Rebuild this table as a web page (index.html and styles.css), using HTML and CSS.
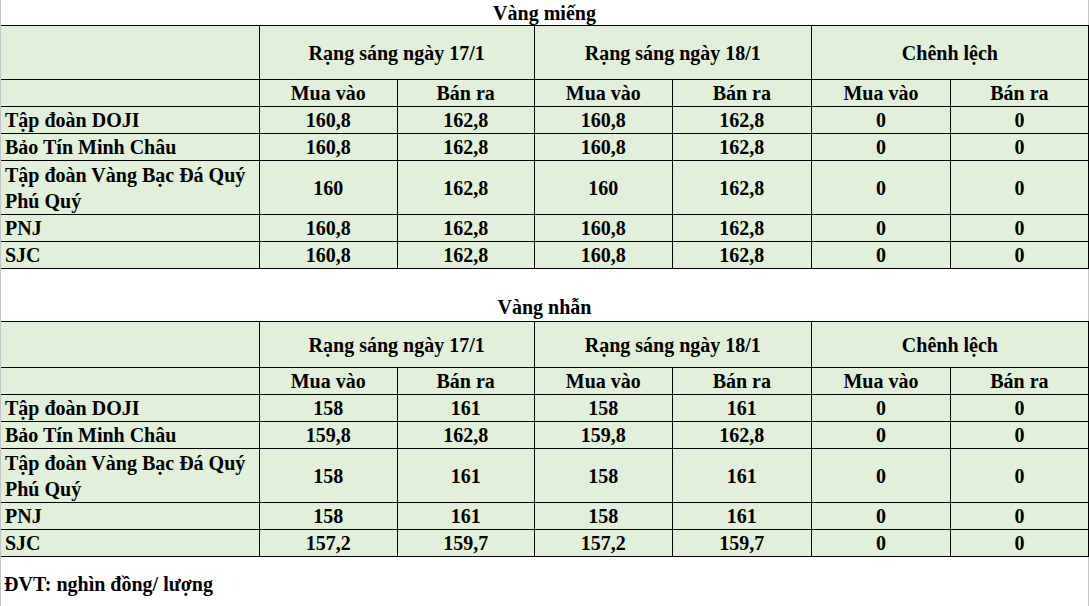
FILE: index.html
```html
<!DOCTYPE html>
<html lang="vi">
<head>
<meta charset="utf-8">
<title>Giá vàng</title>
<link rel="stylesheet" href="styles.css">
</head>
<body>
<div class="sheet">
  <div class="title title-first">Vàng miếng</div>
  <table class="grid">
    <colgroup>
      <col class="c-name"><col class="c-num"><col class="c-num2"><col class="c-num"><col class="c-num3"><col class="c-num3"><col class="c-num">
    </colgroup>
    <tr class="h1">
      <td></td>
      <td colspan="2">Rạng sáng ngày 17/1</td>
      <td colspan="2">Rạng sáng ngày 18/1</td>
      <td colspan="2">Chênh lệch</td>
    </tr>
    <tr class="h2">
      <td></td><td>Mua vào</td><td>Bán ra</td><td>Mua vào</td><td>Bán ra</td><td>Mua vào</td><td>Bán ra</td>
    </tr>
    <tr class="r"><td class="name">Tập đoàn DOJI</td><td>160,8</td><td>162,8</td><td>160,8</td><td>162,8</td><td>0</td><td>0</td></tr>
    <tr class="r"><td class="name">Bảo Tín Minh Châu</td><td>160,8</td><td>162,8</td><td>160,8</td><td>162,8</td><td>0</td><td>0</td></tr>
    <tr class="r2"><td class="name">Tập đoàn Vàng Bạc Đá Quý<br>Phú Quý</td><td>160</td><td>162,8</td><td>160</td><td>162,8</td><td>0</td><td>0</td></tr>
    <tr class="r"><td class="name">PNJ</td><td>160,8</td><td>162,8</td><td>160,8</td><td>162,8</td><td>0</td><td>0</td></tr>
    <tr class="r"><td class="name">SJC</td><td>160,8</td><td>162,8</td><td>160,8</td><td>162,8</td><td>0</td><td>0</td></tr>
  </table>
  <div class="blank"></div>
  <div class="title title-active">Vàng nhẫn</div>
  <table class="grid">
    <colgroup>
      <col class="c-name"><col class="c-num"><col class="c-num2"><col class="c-num"><col class="c-num3"><col class="c-num3"><col class="c-num">
    </colgroup>
    <tr class="h1 h1-short">
      <td></td>
      <td colspan="2">Rạng sáng ngày 17/1</td>
      <td colspan="2">Rạng sáng ngày 18/1</td>
      <td colspan="2">Chênh lệch</td>
    </tr>
    <tr class="h2">
      <td></td><td>Mua vào</td><td>Bán ra</td><td>Mua vào</td><td>Bán ra</td><td>Mua vào</td><td>Bán ra</td>
    </tr>
    <tr class="r"><td class="name">Tập đoàn DOJI</td><td>158</td><td>161</td><td>158</td><td>161</td><td>0</td><td>0</td></tr>
    <tr class="r"><td class="name">Bảo Tín Minh Châu</td><td>159,8</td><td>162,8</td><td>159,8</td><td>162,8</td><td>0</td><td>0</td></tr>
    <tr class="r2"><td class="name">Tập đoàn Vàng Bạc Đá Quý<br>Phú Quý</td><td>158</td><td>161</td><td>158</td><td>161</td><td>0</td><td>0</td></tr>
    <tr class="r"><td class="name">PNJ</td><td>158</td><td>161</td><td>158</td><td>161</td><td>0</td><td>0</td></tr>
    <tr class="r"><td class="name">SJC</td><td>157,2</td><td>159,7</td><td>157,2</td><td>159,7</td><td>0</td><td>0</td></tr>
  </table>
  <div class="blank blank-small"></div>
  <div class="foot">ĐVT: nghìn đồng/ lượng</div>
  <div class="rest"></div>
</div>
</body>
</html>
```
FILE: styles.css
```css
html, body {
  margin: 0;
  padding: 0;
  background: #ffffff;
}

.sheet {
  width: 1089px;
  height: 606px;
  box-sizing: border-box;
  border-left: 1px solid #c4c4c4;
  display: flex;
  flex-direction: column;
  font-family: "Liberation Serif", "Times New Roman", serif;
  font-weight: bold;
  font-size: 20px;
  color: #000;
  overflow: hidden;
}

.title {
  height: 25px;
  line-height: 27px;
  text-align: center;
  border-right: 1px solid #c4c4c4;
  flex: none;
}

.title-active {
  height: 27px;
  line-height: 27px;
  position: relative;
}

.title-active::before {
  content: "";
  position: absolute;
  left: -1px;
  top: 0;
  width: 1px;
  height: 27px;
  background: #1d7a47;
}

.blank {
  height: 25px;
  border-right: 1px solid #c4c4c4;
  flex: none;
}

.blank-small {
  height: 14px;
}

.foot {
  height: 27px;
  line-height: 27px;
  padding-left: 3px;
  border-right: 1px solid #c4c4c4;
  flex: none;
}

.rest {
  flex: 1;
  border-right: 1px solid #c4c4c4;
}

.grid {
  width: 1088px;
  border-collapse: collapse;
  table-layout: fixed;
  background: #e2efda;
  flex: none;
}

.c-name { width: 258px; }
.c-num { width: 138px; }
.c-num2 { width: 137px; }
.c-num3 { width: 139px; }

.grid td {
  border: 1px solid #000;
  padding: 0;
  text-align: center;
  vertical-align: middle;
  line-height: 26px;
  white-space: nowrap;
}

.grid tr td:first-child {
  border-left: none;
}

.grid td.name {
  text-align: left;
  padding-left: 4px;
}

.h1 td { height: 53px; }
.h1-short td { height: 45px; }
.h2 td { height: 26px; }
.r td { height: 26px; }
.r2 td { height: 53px; }
```
